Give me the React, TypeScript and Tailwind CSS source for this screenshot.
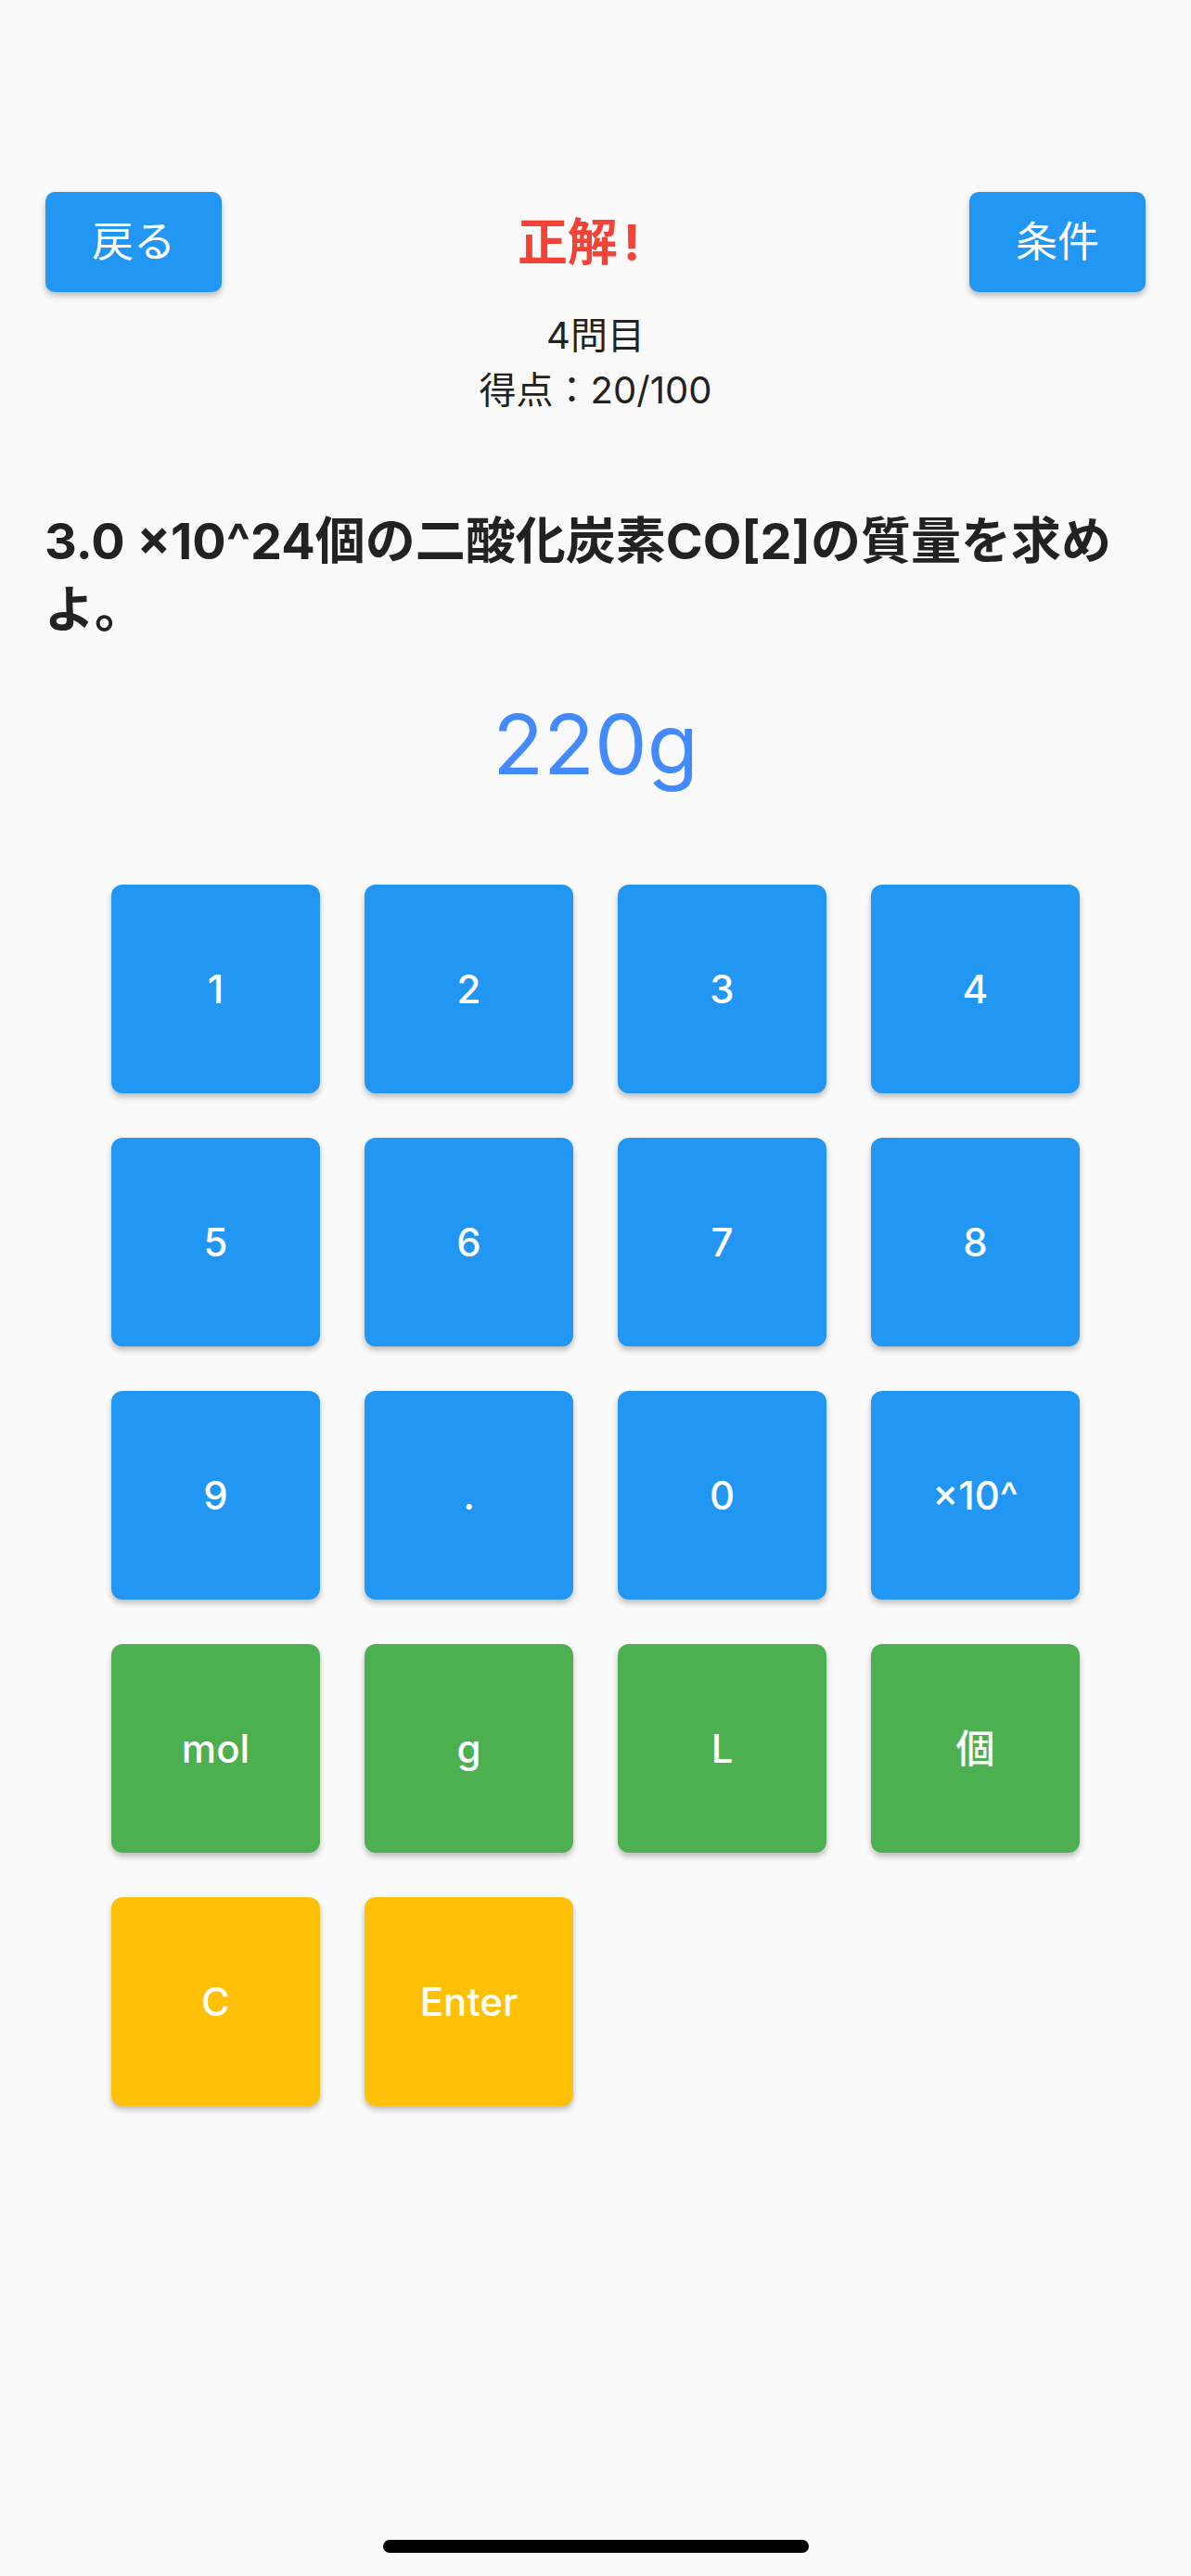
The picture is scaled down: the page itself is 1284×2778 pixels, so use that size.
const font = "font-['Inter','Noto_Sans_CJK_JP',sans-serif]";

type Key = { label: string; color: string };

const keys: Key[] = [
  { label: "1", color: "bg-[#2196f3]" },
  { label: "2", color: "bg-[#2196f3]" },
  { label: "3", color: "bg-[#2196f3]" },
  { label: "4", color: "bg-[#2196f3]" },
  { label: "5", color: "bg-[#2196f3]" },
  { label: "6", color: "bg-[#2196f3]" },
  { label: "7", color: "bg-[#2196f3]" },
  { label: "8", color: "bg-[#2196f3]" },
  { label: "9", color: "bg-[#2196f3]" },
  { label: ".", color: "bg-[#2196f3]" },
  { label: "0", color: "bg-[#2196f3]" },
  { label: "×10^", color: "bg-[#2196f3]" },
  { label: "mol", color: "bg-[#4caf50]" },
  { label: "g", color: "bg-[#4caf50]" },
  { label: "L", color: "bg-[#4caf50]" },
  { label: "個", color: "bg-[#4caf50]" },
  { label: "C", color: "bg-[#ffc107]" },
  { label: "Enter", color: "bg-[#ffc107]" },
];

function TopButton({ label }: { label: string }) {
  return (
    <button className={`w-[190px] h-[108px] rounded-[10px] bg-[#2196f3] text-white text-[45px] ${font} shadow-[0_4px_6px_rgba(0,0,0,0.25)] flex items-center justify-center`}>
      {label}
    </button>
  );
}

export default function App() {
  return (
    <div className={`min-h-[2778px] bg-[#fafafa] flex flex-col ${font}`}>
      {/* Header */}
      <div className="mt-[207px] px-[49px] flex items-center justify-between">
        <TopButton label="戻る" />
        <h1 className="pr-[36px] text-[54px] font-bold text-[#f44336]">
          正解<span className="ml-[6px]">!</span>
        </h1>
        <TopButton label="条件" />
      </div>

      <div className="mt-[17px] text-center text-[40px] leading-[59px] text-[#222]">
        <p>4問目</p>
        <p>得点：20/100</p>
      </div>

      {/* Question */}
      <p className="mt-[97px] px-[48px] text-[54px] leading-[74px] font-bold text-[#222]">
        3.0 ×10^24個の二酸化炭素CO[2]の質量を求めよ。
      </p>

      <p className="mt-[54px] text-center text-[90px] leading-[108px] text-[#448aff]">
        220g
      </p>

      {/* Keypad */}
      <div className="mt-[97px] mx-auto grid grid-cols-[repeat(4,225px)] gap-[48px]">
        {keys.map((k) => (
          <button
            key={k.label}
            className={`w-[225px] h-[225px] rounded-[12px] ${k.color} text-white text-[42px] font-medium shadow-[0_4px_6px_rgba(0,0,0,0.25)] flex items-center justify-center`}
          >
            {k.label}
          </button>
        ))}
      </div>

      {/* Home indicator */}
      <div className="mt-auto mb-[25px] mx-auto w-[459px] h-[14px] rounded-full bg-black" />
    </div>
  );
}
